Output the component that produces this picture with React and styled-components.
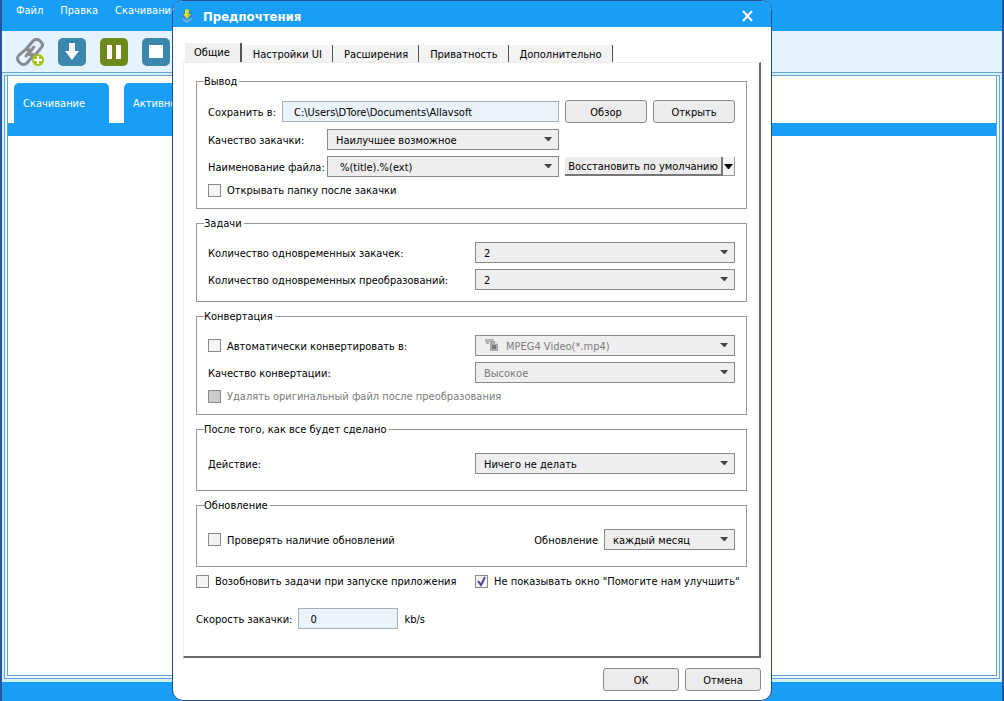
import React, { useState } from "react";
import styled, { createGlobalStyle } from "styled-components";

const GlobalStyle = createGlobalStyle`
  * {
    box-sizing: border-box;
  }

  body {
    margin: 0;
    background: #27549b;
  }

  body,
  button,
  input,
  select {
    font-family: "DejaVu Sans Condensed", "DejaVu Sans", sans-serif;
    font-size: 11px;
    line-height: 14px;
    color: #000;
  }
`;

const Window = styled.div`
  position: relative;
  display: flex;
  flex-direction: column;
  min-height: 100vh;
  margin: 0 2px;
  background: #189ef5;
  overflow: hidden;
`;

const MenuBar = styled.nav`
  display: flex;
  height: 31px;
  gap: 17px;
  padding: 4px 14px;
  overflow: hidden;
`;

const MenuItem = styled.a`
  color: #fff;
  text-decoration: none;
  white-space: nowrap;
`;

const Toolbar = styled.div`
  display: flex;
  align-items: center;
  gap: 14px;
  height: 42px;
  padding-left: 14px;
  background: #e5f2ff;
  border-bottom: 1px solid #6ba3d3;
`;

const ToolButton = styled.button`
  display: flex;
  width: 28px;
  height: 28px;
  padding: 0;
  border: 0;
  background: none;
`;

const Frame = styled.main`
  display: flex;
  flex: 1;
  flex-direction: column;
  padding: 2px 2px 3px;
  background: #d3effc;
`;

const FrameInner = styled.div`
  display: flex;
  flex: 1;
  flex-direction: column;
  padding: 0 2px 2px;
  border: 1px solid #6ba3d3;
  background: #eafaff;
`;

const Content = styled.div`
  flex: 1;
  padding-top: 7px;
  border: 1px solid #5fa3cf;
  border-top: 0;
  background: #fff;
`;

const MainTabs = styled.div`
  display: flex;
  gap: 15px;
  height: 53px;
  padding: 0 6px;
  border-bottom: 13px solid #189ef5;
`;

const MainTab = styled.button`
  width: 95px;
  padding: 2px 9px 0;
  border: 0;
  border-radius: 5px 5px 0 0;
  background: #189ef5;
  color: #fff;
  text-align: left;
`;

const StatusBar = styled.footer`
  height: 19px;
`;

const Overlay = styled.div`
  position: absolute;
  inset: 0;
  display: flex;
  justify-content: center;
  padding-right: 60px;
`;

const Dialog = styled.section`
  display: flex;
  flex-direction: column;
  width: 600px;
  border: 1px solid #23518f;
  border-radius: 11px;
  background: #fff;
  overflow: hidden;
`;

const DialogHeader = styled.header`
  display: flex;
  align-items: center;
  gap: 8px;
  height: 26px;
  padding: 4px 17px 0 6px;
  background: #189ef5;
`;

const DialogTitle = styled.h1`
  flex: 1;
  margin: 0;
  padding-top: 1px;
  color: #fff;
  font-size: 13px;
  line-height: 16px;
  font-weight: bold;
`;

const CloseButton = styled.button`
  display: flex;
  padding: 0;
  border: 0;
  background: none;
`;

const DialogBody = styled.form`
  display: flex;
  flex: 1;
  flex-direction: column;
  padding: 16px 10px 9px;
`;

const Tabs = styled.div`
  display: flex;
  align-items: flex-end;
  height: 19px;
  padding-left: 2px;
`;

const Tab = styled.button`
  height: ${(props) => (props.$active ? 19 : 17)}px;
  padding: ${(props) => (props.$active ? "1px 10px 0 9px" : "2px 10px 0 11px")};
  border: 0;
  border-right: ${(props) => (props.$active ? 2 : 1)}px solid #555;
  background: ${(props) => (props.$active ? "#f0f0f0" : "#f3f3f3")};
  white-space: nowrap;
`;

const Panel = styled.div`
  display: flex;
  flex: 1;
  flex-direction: column;
  gap: 7px;
  padding: 11px 12px 0;
  border: 1px solid #ececec;
  border-right: 2px solid #6b6b6b;
  border-bottom: 2px solid #6b6b6b;
`;

const Group = styled.fieldset`
  display: flex;
  flex-direction: column;
  gap: 6px;
  min-width: 0;
  margin: 0;
  padding: ${(props) => (props.$roomy ? "17px 11px 16px" : "12px 11px 11px")};
  border: 1px solid #999;
`;

const Legend = styled.legend`
  height: 14px;
  margin-left: -4px;
  padding: 1px 2px 0 0;
`;

const Row = styled.div`
  display: flex;
  align-items: center;
  justify-content: space-between;
  gap: 6px;
`;

const Side = styled.div`
  display: flex;
  gap: 6px;
  width: 170px;
`;

const Label = styled.label`
  flex: ${(props) => (props.$fixed ? "0 0 113px" : "none")};
  min-width: 0;
  padding-top: 2px;
  white-space: nowrap;
`;

const TextInput = styled.input`
  flex: ${(props) => (props.$short ? "0 0 100px" : "1")};
  min-width: 0;
  height: 21px;
  padding: 1px 11px 0;
  border: 1px solid #a5b0ba;
  border-radius: 0;
  background: #eaf2fa;
`;

const SelectBox = styled.div`
  position: relative;
  flex: ${(props) => (props.$width ? `0 0 ${props.$width}px` : "1")};
  height: 21px;

  > svg {
    position: absolute;
    top: 8px;
    right: 7px;
    pointer-events: none;
  }

  > svg.file {
    top: 4px;
    left: 10px;
  }
`;

const StyledSelect = styled.select`
  width: 100%;
  height: 100%;
  padding: 2px 20px 0 ${(props) => props.$indent || 8}px;
  border: 1px solid #8a8a8a;
  border-radius: 0;
  background: #eee;
  appearance: none;

  &:disabled {
    color: #7b7b7b;
    opacity: 1;
  }
`;

const Button = styled.button`
  flex: 1;
  height: 23px;
  padding: 2px 0 0;
  border: 1px solid #8a8a8a;
  border-radius: 3px;
  background: #ececec;
`;

const SplitButton = styled.div`
  display: flex;
  width: 170px;
  height: 19px;
`;

const SplitMain = styled.button`
  flex: 1;
  padding: 2px 0 0;
  border: 0;
  border-right: 2px solid #777;
  border-bottom: 2px solid #777;
  background: #ececec;
  white-space: nowrap;
`;

const SplitArrow = styled.button`
  display: flex;
  align-items: center;
  justify-content: center;
  width: 12px;
  padding: 0;
  border: 0;
  border-right: 1px solid #999;
  border-bottom: 1px solid #999;
  background: #f4f4f4;
`;

const CheckLabel = styled.label`
  display: flex;
  align-items: center;
  gap: 6px;
  height: 14px;
  color: ${(props) => (props.$disabled ? "#7b7b7b" : "#000")};
  white-space: nowrap;
`;

const CheckText = styled.span`
  padding-top: 2px;
`;

const CheckWrap = styled.span`
  display: grid;

  > * {
    grid-area: 1 / 1;
  }

  > svg {
    pointer-events: none;
  }
`;

const CheckInput = styled.input`
  width: 13px;
  height: 13px;
  margin: 0;
  border: 1px solid #8a8a8a;
  background: #f4f4f4;
  appearance: none;

  &:disabled {
    background: #ccc;
  }
`;

const Options = styled.div`
  display: grid;
  grid-template-columns: 1fr 272px;
`;

const SpeedRow = styled.div`
  display: flex;
  align-items: center;
  gap: 6px;
  margin-top: 13px;
`;

const Unit = styled.span`
  padding-top: 2px;
`;

const Footer = styled.div`
  display: flex;
  align-self: flex-end;
  gap: 6px;
  width: 158px;
  padding-top: 10px;
`;

const LinkIcon = () => (
  <svg width="28" height="30" viewBox="0 0 28 30">
    <g fill="none" stroke="#858b90" strokeWidth="3" strokeLinecap="round">
      <path d="M12 12l-1-2 6-7c2-2 4-2 6-1l2 2c2 2 2 4 0 6l-6 7c-2 1-4 1-6-1" />
      <path d="M16 16l1 2-6 7c-2 2-5 2-7 0l-1-1c-2-2-2-5 0-7l6-5c2-1 4-1 5 1" />
      <path d="M10 18l8-9" />
    </g>
    <circle cx="22" cy="22" r="6" fill="#a3c614" />
    <path d="M22 18v8M18 22h8" stroke="#fff" strokeWidth="2" />
  </svg>
);

const DownIcon = () => (
  <svg width="28" height="28" viewBox="0 0 28 28">
    <rect width="28" height="28" rx="5" fill="#3a86ad" />
    <path d="M11 5h6v8h4l-7 9-7-9h4z" fill="#fff" />
  </svg>
);

const PauseIcon = () => (
  <svg width="28" height="28" viewBox="0 0 28 28">
    <rect width="28" height="28" rx="5" fill="#6b8a1b" />
    <path d="M7 7h5v14H7zM16 7h5v14h-5z" fill="#fff" />
  </svg>
);

const StopIcon = () => (
  <svg width="28" height="28" viewBox="0 0 28 28">
    <rect width="28" height="28" rx="5" fill="#3a86ad" />
    <path d="M7 7h14v13H7z" fill="#fff" />
  </svg>
);

const AppIcon = () => (
  <svg width="16" height="16" viewBox="0 0 16 16">
    <circle cx="8" cy="9" r="6" fill="#2f86d2" />
    <path d="M2 9l6 3 6-3-2 4-4 2-4-2z" fill="#5db2ea" />
    <path d="M6 2l2-1 2 1v4h2l-4 5-4-5h2z" fill="#dfe63a" />
    <path d="M8 1l2 1v4h2l-4 5z" fill="#b6d42c" />
  </svg>
);

const Arrow = () => (
  <svg width="8" height="4" viewBox="0 0 8 4">
    <path d="M0 0h8L5 4H4z" fill="#444" />
  </svg>
);

const FileIcon = () => (
  <svg className="file" width="14" height="13" viewBox="0 0 14 13">
    <path d="M0 0h9v3H4v2H1V3H0z" fill="#b4b4b4" />
    <path d="M5 2h5l3 3v7H5z" fill="#a8a8a8" />
    <path d="M10 2l3 3h-3z" fill="#ddd" />
    <path d="M7 6h4v4H7z" fill="#777" />
  </svg>
);

const Check = ({ label, disabled, defaultChecked = false }) => {
  const [checked, setChecked] = useState(defaultChecked);

  return (
    <CheckLabel $disabled={disabled}>
      <CheckWrap>
        <CheckInput
          type="checkbox"
          checked={checked}
          disabled={disabled}
          onChange={(e) => setChecked(e.target.checked)}
        />
        {checked && (
          <svg width="13" height="13" viewBox="0 0 13 13">
            <path d="M3 6l3 4 4-8" fill="none" stroke="#4a4a9c" strokeWidth="2" />
          </svg>
        )}
      </CheckWrap>
      <CheckText>{label}</CheckText>
    </CheckLabel>
  );
};

const Select = ({ id, value, width, indent, disabled, icon, label }) => (
  <SelectBox $width={width}>
    <StyledSelect id={id} $indent={indent} disabled={disabled} aria-label={label}>
      <option>{value}</option>
    </StyledSelect>
    {icon}
    <Arrow />
  </SelectBox>
);

const tabs = ["Общие", "Настройки UI", "Расширения", "Приватность", "Дополнительно"];

const App = () => {
  const [activeTab, setActiveTab] = useState(0);

  return (
    <>
      <GlobalStyle />
      <Window>
        <MenuBar>
          <MenuItem href="#file">Файл</MenuItem>
          <MenuItem href="#edit">Правка</MenuItem>
          <MenuItem href="#download">Скачивание</MenuItem>
        </MenuBar>
        <Toolbar>
          <ToolButton aria-label="Добавить"><LinkIcon /></ToolButton>
          <ToolButton aria-label="Скачать"><DownIcon /></ToolButton>
          <ToolButton aria-label="Пауза"><PauseIcon /></ToolButton>
          <ToolButton aria-label="Стоп"><StopIcon /></ToolButton>
        </Toolbar>
        <Frame>
          <FrameInner>
            <Content>
              <MainTabs>
                <MainTab>Скачивание</MainTab>
                <MainTab>Активность</MainTab>
              </MainTabs>
            </Content>
          </FrameInner>
        </Frame>
        <StatusBar />

        <Overlay>
          <Dialog role="dialog" aria-labelledby="title">
            <DialogHeader>
              <AppIcon />
              <DialogTitle id="title">Предпочтения</DialogTitle>
              <CloseButton aria-label="Закрыть">
                <svg width="12" height="12" viewBox="0 0 12 12">
                  <path d="M1 1l9 10M10 1L1 11" stroke="#fff" strokeWidth="2" />
                </svg>
              </CloseButton>
            </DialogHeader>
            <DialogBody onSubmit={(e) => e.preventDefault()}>
              <Tabs role="tablist">
                {tabs.map((tab, i) => (
                  <Tab
                    key={tab}
                    type="button"
                    role="tab"
                    aria-selected={i === activeTab}
                    $active={i === activeTab}
                    onClick={() => setActiveTab(i)}
                  >
                    {tab}
                  </Tab>
                ))}
              </Tabs>
              <Panel>
                <Group>
                  <Legend>Вывод</Legend>
                  <Row>
                    <Label htmlFor="folder">Сохранить в:</Label>
                    <TextInput id="folder" defaultValue="C:\Users\DTore\Documents\Allavsoft" />
                    <Side>
                      <Button type="button">Обзор</Button>
                      <Button type="button">Открыть</Button>
                    </Side>
                  </Row>
                  <Row>
                    <Label htmlFor="quality" $fixed>Качество закачки:</Label>
                    <Select id="quality" value="Наилучшее возможное" />
                    <Side />
                  </Row>
                  <Row>
                    <Label htmlFor="naming" $fixed>Наименование файла:</Label>
                    <Select id="naming" value="%(title).%(ext)" indent={12} />
                    <SplitButton>
                      <SplitMain type="button">Восстановить по умолчанию</SplitMain>
                      <SplitArrow type="button" aria-label="Ещё">
                        <svg width="9" height="5" viewBox="0 0 9 5">
                          <path d="M0 0h9L5 5H4z" fill="#000" />
                        </svg>
                      </SplitArrow>
                    </SplitButton>
                  </Row>
                  <Check label="Открывать папку после закачки" />
                </Group>

                <Group>
                  <Legend>Задачи</Legend>
                  <Row>
                    <Label htmlFor="downloads">Количество одновременных закачек:</Label>
                    <Select id="downloads" value="2" width={260} />
                  </Row>
                  <Row>
                    <Label htmlFor="converts">Количество одновременных преобразований:</Label>
                    <Select id="converts" value="2" width={260} />
                  </Row>
                </Group>

                <Group>
                  <Legend>Конвертация</Legend>
                  <Row>
                    <Check label="Автоматически конвертировать в:" />
                    <Select
                      label="Формат"
                      value="MPEG4 Video(*.mp4)"
                      width={260}
                      indent={30}
                      icon={<FileIcon />}
                      disabled
                    />
                  </Row>
                  <Row>
                    <Label htmlFor="convertQuality">Качество конвертации:</Label>
                    <Select id="convertQuality" value="Высокое" width={260} disabled />
                  </Row>
                  <Check label="Удалять оригинальный файл после преобразования" disabled />
                </Group>

                <Group $roomy>
                  <Legend>После того, как все будет сделано</Legend>
                  <Row>
                    <Label htmlFor="action">Действие:</Label>
                    <Select id="action" value="Ничего не делать" width={260} />
                  </Row>
                </Group>

                <Group $roomy>
                  <Legend>Обновление</Legend>
                  <Row>
                    <Check label="Проверять наличие обновлений" />
                    <Row>
                      <Label htmlFor="update">Обновление</Label>
                      <Select id="update" value="каждый месяц" width={131} />
                    </Row>
                  </Row>
                </Group>

                <Options>
                  <Check label="Возобновить задачи при запуске приложения" />
                  <Check label={'Не показывать окно "Помогите нам улучшить"'} defaultChecked />
                </Options>
                <SpeedRow>
                  <Label htmlFor="speed">Скорость закачки:</Label>
                  <TextInput id="speed" defaultValue="0" $short />
                  <Unit>kb/s</Unit>
                </SpeedRow>
              </Panel>
              <Footer>
                <Button type="submit">OK</Button>
                <Button type="button">Отмена</Button>
              </Footer>
            </DialogBody>
          </Dialog>
        </Overlay>
      </Window>
    </>
  );
};

export default App;
